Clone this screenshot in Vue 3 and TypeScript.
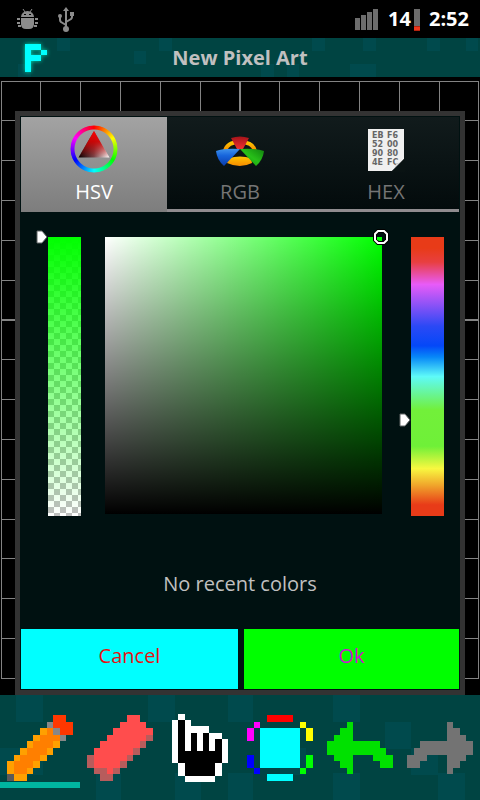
<script setup lang="ts">
import { computed, ref } from 'vue'

type Palette = Record<string, string>
interface Tool { id: string; label: string; rows: string[]; cols: number; colors: Palette }
interface Cell { x: number; y: number; w: number; fill: string }

const arrow = [
  '..........', '...g......', '..gg......', '.ggg......', 'gggggggg..',
  'ggggggggg.', '.ggg...ggg', '..gg....gg', '...g......', '..........',
]

const tools: Tool[] = [
  {
    id: 'pencil', label: 'Pencil', cols: 10,
    colors: { r: '#ff3700', g: '#878787', a: '#ffa000', o: '#ff7f00', d: '#5a5a5a' },
    rows: [
      '.......rr.', '......grrr', '.....aogrr', '....aooog.', '...aoooa..',
      '..aoooa...', '.aoooa....', 'aoooa.....', 'aooa......', 'daa.......',
    ],
  },
  {
    id: 'eraser', label: 'Eraser', cols: 10,
    colors: { l: '#ff4d4d', d: '#b75c5c' },
    rows: [
      '......ll..', '.....llll.', '....llllll', '...lllllld', '..lllllld.',
      '.lllllld..', 'dllllld...', 'dlllld....', '.ddld.....', '..dd......',
    ],
  },
  {
    id: 'hand', label: 'Pan', cols: 9,
    colors: { w: '#ffffff', b: '#000000' },
    rows: [
      '.w.......', 'wbw......', 'wbwwww...', 'wbwbwbww.', 'wbwbwbwbw', 'wbwbwbwbw',
      'wbbbbbbbw', 'wbbbbbbbw', '.wbbbbbw.', '.wbbbbbw.', '..wwwww..',
    ],
  },
  {
    id: 'color', label: 'Color', cols: 10,
    colors: { r: '#ff0000', m: '#ff00ff', y: '#ffff00', b: '#0000ff', g: '#00ff00', c: '#00ffff' },
    rows: [
      '...rrrr...', '.m......y.', 'm.cccccc.y', 'm.cccccc.y', '..cccccc..',
      '..cccccc..', 'b.cccccc.g', 'b.cccccc.g', '.b......g.', '...cccc...',
    ],
  },
  { id: 'undo', label: 'Undo', cols: 10, colors: { g: '#00e100' }, rows: arrow },
  {
    id: 'redo', label: 'Redo', cols: 10, colors: { g: '#737373' },
    rows: arrow.map((row) => row.split('').reverse().join('')),
  },
]

/* Joins neighbouring pixels of one colour into a single run. */
function runs(tool: Tool): Cell[] {
  const out: Cell[] = []
  tool.rows.forEach((row, y) => {
    let x = 0
    while (x < row.length) {
      const key = row[x]
      let w = 1
      while (row[x + w] === key) w++
      if (key !== '.') out.push({ x, y, w, fill: tool.colors[key] })
      x += w
    }
  })
  return out
}

const sprites = tools.map((tool) => ({ ...tool, cells: runs(tool) }))
const activeTool = ref('pencil')

const tabs = ['HSV', 'RGB', 'HEX']
const activeTab = ref('HSV')

const alpha = ref(0)
const huePosition = ref(240)
const saturation = ref(1)
const brightness = ref(1)

const pureColor = computed(() => `hsl(${360 - huePosition.value}, 100%, 50%)`)
const alphaTop = computed(() => `${alpha.value}%`)
const hueTop = computed(() => `${(huePosition.value / 360) * 98.5}%`)

function pick(event: PointerEvent) {
  const box = (event.currentTarget as HTMLElement).getBoundingClientRect()
  saturation.value = Math.min(1, Math.max(0, (event.clientX - box.left) / box.width))
  brightness.value = 1 - Math.min(1, Math.max(0, (event.clientY - box.top) / box.height))
}

const titleTiles = [
  [57, 0, 13], [134, 13, 12], [159, 0, 13], [18, 26, 13], [312, 0, 13], [363, 0, 13],
  [427, 0, 13], [466, 0, 12], [261, 26, 13], [287, 26, 12], [350, 26, 26],
]
const toolTiles = [
  [16, 0, 27], [0, 53, 43], [148, 0, 27], [96, 78, 25], [228, 0, 25], [175, 78, 26], [228, 78, 25],
  [280, 53, 26], [333, 0, 27], [385, 27, 26], [411, 53, 27], [333, 78, 27], [438, 78, 27],
]
const columns = Array.from({ length: 13 }, (_, i) => Math.floor(1 + i * 39.83))
const lines = Array.from({ length: 16 }, (_, i) => Math.floor(4 + i * 39.83))
</script>

<template>
  <div class="app">
    <div class="status">
      <div class="group">
        <svg class="bug" viewBox="0 0 21 21" aria-hidden="true">
          <g fill="#8c8c8c">
            <path d="M4 8a6.5 6 0 0 1 13 0z" />
            <path d="M4 9h13v6q0 5-5 5h-3q-5 0-5-5z" />
            <path d="M0 9h3v2H0zM0 13h3v2H0zM1 16h3v2H1zM18 9h3v2h-3zM18 13h3v2h-3zM17 16h3v2h-3z" />
          </g>
          <path d="M6 0l2 3M15 0l-2 3" stroke="#8c8c8c" />
          <path d="M7 5h2v1H7zM12 5h2v1h-2z" fill="#000" />
        </svg>
        <svg class="usb" viewBox="0 0 16 25" aria-hidden="true">
          <path d="M8 4v18M8 18l-5-3q-1-1-1-2V9M8 15l5-3q1-1 1-2V7" fill="none" stroke="#8c8c8c" stroke-width="2" />
          <path d="M8 0l3 4H5zM12 5h4v4h-4z" fill="#8c8c8c" />
          <circle cx="2" cy="9" r="2" fill="#8c8c8c" />
          <circle cx="8" cy="22" r="3" fill="#8c8c8c" />
        </svg>
      </div>
      <div class="group right">
        <svg class="signal" viewBox="0 0 23 21" aria-hidden="true">
          <path d="M0 9h5v12H0zM6 6h5v15H6zM12 3h5v18h-5zM18 0h5v21h-5z" fill="#6d6d6d" />
        </svg>
        <span class="level">14</span>
        <svg class="battery" viewBox="0 0 6 22" aria-hidden="true">
          <path d="M0 0h6v22H0z" fill="#6b6b6b" />
          <path d="M0 17h6v5H0z" fill="#b3230f" />
          <path d="M0 18h6v3H0z" fill="#f0371b" />
        </svg>
        <span class="clock">2:52</span>
      </div>
    </div>

    <header class="titlebar">
      <svg class="tiles" viewBox="0 0 480 39" preserveAspectRatio="xMidYMid slice" aria-hidden="true">
        <rect v-for="(t, i) in titleTiles" :key="i" :x="t[0]" :y="t[1]" :width="t[2]" height="13" />
      </svg>
      <svg class="logo" viewBox="0 0 24 30" aria-hidden="true">
        <path d="M1 1h16v6h6v5h-6v6H7v11H1zM7 7v5h10V7z" fill="#00ffff" fill-rule="evenodd" />
      </svg>
      <h1>New Pixel Art</h1>
    </header>

    <main class="canvas">
      <svg class="grid" viewBox="0 0 480 618" preserveAspectRatio="none" aria-hidden="true">
        <rect v-for="(x, i) in columns" :key="'c' + i" :x="x" y="4" :width="i === 6 ? 2 : 1" height="598" />
        <rect v-for="(y, i) in lines" :key="'r' + i" x="1" :y="y" width="478" :height="i === 6 ? 2 : 1" />
      </svg>

      <section class="dialog" role="dialog" aria-label="Color picker">
        <div class="tabs" role="tablist">
          <button
            v-for="tab in tabs" :key="tab" type="button" role="tab" class="tab"
            :class="{ selected: tab === activeTab }" :aria-selected="tab === activeTab" @click="activeTab = tab"
          >
            <span v-if="tab === 'HSV'" class="icon">
              <span class="ring"></span>
              <svg class="triangle" viewBox="0 0 48 48" aria-hidden="true">
                <defs>
                  <linearGradient id="base" x1="9" y1="0" x2="39" y2="0" gradientUnits="userSpaceOnUse">
                    <stop offset="0" stop-color="#000" /><stop offset=".5" stop-color="#77494d" /><stop offset="1" stop-color="#fff" />
                  </linearGradient>
                  <linearGradient id="tip" x1="0" y1="6" x2="0" y2="33" gradientUnits="userSpaceOnUse">
                    <stop offset="0" stop-color="#f00" /><stop offset=".4" stop-color="#d00000" stop-opacity=".9" /><stop offset="1" stop-color="#b00" stop-opacity="0" />
                  </linearGradient>
                </defs>
                <path d="M24 6l15.5 26.5H8.5z" fill="url(#base)" />
                <path d="M24 6l15.5 26.5H8.5z" fill="url(#tip)" />
              </svg>
            </span>
            <svg v-else-if="tab === 'RGB'" class="icon" viewBox="0 0 48 48" aria-hidden="true">
              <defs>
                <linearGradient id="gold" x1="0" y1="0" x2="0" y2="1"><stop offset="0" stop-color="#ffc400" /><stop offset="1" stop-color="#f58b00" /></linearGradient>
                <linearGradient id="blue" x1="0" y1="0" x2="0" y2="1"><stop offset="0" stop-color="#3f93ec" /><stop offset=".4" stop-color="#1765dc" /><stop offset="1" stop-color="#0b3baa" /></linearGradient>
                <linearGradient id="green" x1="1" y1="0" x2="0" y2="1"><stop offset="0" stop-color="#11800f" /><stop offset=".5" stop-color="#27c018" /><stop offset="1" stop-color="#128a0c" /></linearGradient>
                <linearGradient id="red" x1="0" y1="0" x2="0" y2="1"><stop offset="0" stop-color="#a5141a" /><stop offset="1" stop-color="#f03030" /></linearGradient>
              </defs>
              <path d="M9 26q2-9 15-9t15 9" fill="none" stroke="url(#gold)" stroke-width="4" />
              <path d="M13 33q11-3 22 0l1 5q-12 6-25 0z" fill="url(#gold)" />
              <path d="M15 13q9-3 18 0l-6 11h-6z" fill="url(#red)" />
              <path d="M0 26q8-3 24-2L8 41Q1 35 0 26z" fill="url(#blue)" />
              <path d="M48 26q-8-3-24-2l16 17q7-6 8-15z" fill="url(#green)" />
            </svg>
            <svg v-else class="icon" viewBox="0 0 48 48" aria-hidden="true">
              <path d="M6 4h36v30L30 46H6z" fill="#f0f0f0" />
              <g class="digits" fill="#666">
                <text x="10" y="13">EB</text><text x="25" y="13">F6</text>
                <text x="10" y="22">52</text><text x="25" y="22">00</text>
                <text x="10" y="31">90</text><text x="25" y="31">80</text>
                <text x="10" y="40">4E</text><text x="25" y="40">FC</text>
              </g>
              <path d="M42 34L30 46q3-3 4-7q4-1 8-5z" fill="#d4d4d4" />
              <path d="M43 33v14H29z" fill="#0a1313" />
            </svg>
            <span class="name">{{ tab }}</span>
          </button>
        </div>

        <div class="picker">
          <div class="bar">
            <input v-model.number="alpha" class="alpha" type="range" min="0" max="100" aria-label="Transparency" />
            <svg class="pointer" :style="{ top: alphaTop }" viewBox="0 0 12 14" aria-hidden="true">
              <path d="M1 1h5l5 6-5 6H1z" fill="#fff" stroke="#5e6464" />
            </svg>
          </div>
          <div class="field" :style="{ backgroundColor: pureColor }" @pointerdown="pick">
            <svg
              class="marker" viewBox="0 0 16 16" aria-hidden="true"
              :style="{ left: saturation * 100 + '%', top: (1 - brightness) * 100 + '%' }"
            >
              <path d="M5 2h6l3 3v6l-3 3H5l-3-3V5z" fill="none" stroke="#000" stroke-width="4" />
              <path d="M5 2h6l3 3v6l-3 3H5l-3-3V5z" fill="none" stroke="#fff" stroke-width="2" />
            </svg>
          </div>
          <div class="bar">
            <input v-model.number="huePosition" class="hue" type="range" min="0" max="360" aria-label="Hue" />
            <svg class="pointer" :style="{ top: hueTop }" viewBox="0 0 12 14" aria-hidden="true">
              <path d="M1 1h5l5 6-5 6H1z" fill="#fff" stroke="#5e6464" />
            </svg>
          </div>
        </div>

        <p class="recent">No recent colors</p>

        <div class="actions">
          <button type="button" class="cancel">Cancel</button>
          <button type="button" class="ok">Ok</button>
        </div>
      </section>
    </main>

    <nav class="toolbar" aria-label="Tools">
      <svg class="tiles" viewBox="0 0 480 105" preserveAspectRatio="xMidYMid slice" aria-hidden="true">
        <rect v-for="(t, i) in toolTiles" :key="i" :x="t[0]" :y="t[1]" :width="t[2]" height="27" />
      </svg>
      <button
        v-for="s in sprites" :key="s.id" type="button" class="tool"
        :class="{ active: s.id === activeTool }" :aria-label="s.label" @click="activeTool = s.id"
      >
        <svg class="sprite" :class="{ tall: s.id === 'hand' }" :viewBox="`0 0 ${s.cols} ${s.rows.length}`" aria-hidden="true">
          <rect v-for="(c, i) in s.cells" :key="i" :x="c.x" :y="c.y" :width="c.w" height="1" :fill="c.fill" />
        </svg>
      </button>
    </nav>
  </div>
</template>

<style>
body {
  background: #000;
}
</style>

<style scoped>
.app {
  display: flex;
  flex-direction: column;
  min-height: 100vh;
  background: #000;
  color: #c0c0c0;
  font-family: "Open Sans", "Noto Sans", sans-serif;
  font-size: 20px;
  line-height: 28px;
}
button {
  margin: 0;
  padding: 0;
  border: 0;
  background: none;
  color: inherit;
  font: inherit;
}
svg {
  display: block;
}

.status {
  display: flex;
  align-items: center;
  justify-content: space-between;
  height: 38px;
  padding: 0 11px 0 17px;
  color: #fff;
  font-weight: 700;
}
.group {
  display: flex;
  align-items: center;
  gap: 20px;
}
.right {
  gap: 0;
}
.bug {
  width: 21px;
  height: 21px;
}
.usb {
  width: 16px;
  height: 25px;
}
.signal {
  width: 23px;
  height: 21px;
  margin-right: 10px;
}
.battery {
  width: 6px;
  height: 22px;
  margin: 2px 9px 0 3px;
}

.titlebar {
  position: relative;
  display: grid;
  grid-template-columns: 1fr auto 1fr;
  align-items: center;
  height: 39px;
  background: #004442;
}
.tiles {
  position: absolute;
  inset: 0;
  width: 100%;
  height: 100%;
  fill: #004a4d;
  shape-rendering: crispEdges;
}
.logo {
  position: relative;
  width: 24px;
  height: 30px;
  margin-left: 24px;
  filter: drop-shadow(0 0 2px #00d8b0);
}
h1 {
  position: relative;
  margin: 0;
  font-size: 20px;
  font-weight: 700;
  line-height: 28px;
}

.canvas {
  position: relative;
  display: flex;
  flex: 1;
  flex-direction: column;
  padding: 34px 15px 0;
}
.grid {
  position: absolute;
  inset: 0;
  width: 100%;
  height: 100%;
  fill: #838383;
  shape-rendering: crispEdges;
}

.dialog {
  position: relative;
  display: flex;
  flex: 1;
  flex-direction: column;
  padding: 1px;
  border: 5px solid #333;
  background: #001111;
}
.tabs {
  display: grid;
  grid-template-columns: repeat(3, 1fr);
}
.tab {
  display: flex;
  flex-direction: column;
  align-items: center;
  gap: 5px;
  padding: 8px 0 3px;
  border-bottom: 3px solid #8f8c8f;
  background: linear-gradient(#111b1c, #030b0c);
  color: #757575;
}
.tab.selected {
  padding-bottom: 6px;
  border-bottom: 0;
  background: linear-gradient(#a3a3a3, #7d7d7d);
  color: #fff;
}
.icon {
  position: relative;
  display: block;
  width: 48px;
  height: 48px;
}
.ring {
  position: absolute;
  inset: 0;
  border-radius: 50%;
  background: conic-gradient(#f00, #ff0 60deg, #0f0 120deg, #0ff 180deg, #00f 240deg, #f0f 300deg, #f00);
  mask: radial-gradient(circle, transparent 19px, #000 20px, #000 23px, transparent 24px);
}
.triangle {
  position: absolute;
  inset: 0;
}
.digits {
  font-family: "DejaVu Sans", sans-serif;
  font-size: 8px;
  font-weight: 700;
}

.picker {
  display: flex;
  padding: 25px 15px 0 27px;
}
.bar {
  position: relative;
  width: 33px;
  height: 279px;
}
.bar input {
  display: block;
  width: 100%;
  height: 100%;
  margin: 0;
  appearance: none;
  writing-mode: vertical-lr;
}
.bar input::-webkit-slider-thumb {
  width: 33px;
  height: 1px;
  appearance: none;
  background: transparent;
}
.alpha {
  background:
    linear-gradient(#0f0, transparent),
    repeating-conic-gradient(#bfbfbf 0 25%, #fff 0 50%) 0 0 / 12px 12px;
}
.hue {
  background: linear-gradient(
    #e83b18 0, #e83b18 4%, #e83f40 9%, #e85bf8 17%, #2b49f5 32%, #0448f8 39%,
    #0787f8 43%, #5efaf8 50%, #72f03a 62%, #6ff038 75%, #f8f840 83%, #f0a52b 89%, #e83b18 96%
  );
}
.pointer {
  position: absolute;
  left: -12px;
  width: 12px;
  height: 14px;
  margin-top: -7px;
}
.field {
  position: relative;
  flex: 1;
  height: 277px;
  margin: 0 29px 0 24px;
  background-image: linear-gradient(transparent, #000), linear-gradient(to right, #fff, transparent);
}
.marker {
  position: absolute;
  width: 16px;
  height: 16px;
  margin: -8px 0 0 -9px;
}
.recent {
  flex: 1;
  margin: 0;
  padding: 54px 0 31px;
  text-align: center;
}
.actions {
  display: grid;
  grid-template-columns: 217fr 215fr;
  gap: 6px;
}
.actions button {
  height: 60px;
  padding-bottom: 6px;
}
.cancel {
  background: #00ffff;
  color: #e51212;
}
.ok {
  background: #00ff00;
  color: #d30fd3;
}

.toolbar {
  position: relative;
  display: grid;
  grid-template-columns: repeat(6, 1fr);
  height: 105px;
  background: #004442;
}
.tool {
  position: relative;
  display: grid;
  place-items: center;
}
.tool.active::after {
  position: absolute;
  right: 0;
  bottom: 12px;
  left: 0;
  height: 6px;
  background: #00b5a0;
  content: "";
}
.sprite {
  width: 66px;
  height: 66px;
  shape-rendering: crispEdges;
}
.sprite.tall {
  width: 56px;
  height: 68px;
}
</style>
